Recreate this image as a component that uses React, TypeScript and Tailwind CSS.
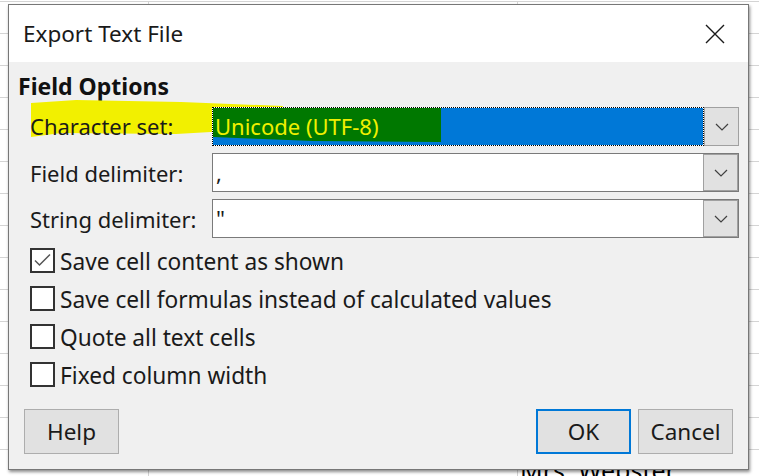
import React from "react";

const rows = Array.from({ length: 15 });

function Chevron() {
  return (
    <svg width="14" height="8" viewBox="0 0 14 8" fill="none">
      <path d="M1 1 L7 7 L13 1" stroke="#404040" strokeWidth="1.2" />
    </svg>
  );
}

function DropButton() {
  return (
    <div className="w-[35px] h-full flex items-center justify-center bg-[#e1e1e1] border border-[#a0a0a0] shrink-0">
      <Chevron />
    </div>
  );
}

function Checkbox({ checked, label }: { checked?: boolean; label: string }) {
  return (
    <div className="h-[38px] flex items-center">
      <div className="w-[25px] h-[25px] border-2 border-[#333333] bg-white flex items-center justify-center shrink-0">
        {checked && (
          <svg width="21" height="21" viewBox="0 0 21 21" fill="none">
            <path d="M3 10.5 L7.5 15 L18 4.5" stroke="#555555" strokeWidth="1.5" />
          </svg>
        )}
      </div>
      <span className="ml-[5px] pt-[4px] text-[22.7px] leading-[28px] text-[#1a1a1a]">{label}</span>
    </div>
  );
}

function Button({ label, focused }: { label: string; focused?: boolean }) {
  return (
    <div
      className={
        focused
          ? "w-[95px] h-[45px] flex items-center justify-center bg-[#e1e1e1] border-2 border-[#0078d7] text-[22.5px] text-[#1a1a1a]"
          : "w-[95px] h-[45px] flex items-center justify-center bg-[#e1e1e1] border border-[#adadad] text-[22.5px] text-[#1a1a1a]"
      }
    >
      {label}
    </div>
  );
}

export default function App() {
  return (
    <div className="relative w-[759px] h-[476px] overflow-hidden bg-white font-['Noto_Sans',sans-serif]">
      {/* spreadsheet behind the dialog */}
      <div className="mt-[1px] border-t border-[#d4d4d4] flex flex-col">
        {rows.map((_, i) => (
          <div key={i} className="h-[32px] flex border-b border-[#d4d4d4]">
            <div className="w-[149px] border-r border-[#d4d4d4]" />
            <div className="w-[369px] border-r border-[#d4d4d4]" />
            <div className="flex-1 pl-[2px]">
              {i === 14 && <span className="block text-[25px] leading-[32px] text-black mt-[4px] whitespace-nowrap">Mrs. Webster</span>}
            </div>
          </div>
        ))}
      </div>

      {/* dialog */}
      <div className="absolute left-[8px] top-[4px] w-[741px] h-[466px] border border-[#777777] bg-[#f0f0f0] shadow-[1px_2px_3px_rgba(0,0,0,0.45)] flex flex-col">
        <div className="h-[57px] bg-white flex items-center justify-between pl-[14px] pr-[23px] shrink-0">
          <span className="text-[22.5px] text-[#1a1a1a]">Export Text File</span>
          <svg width="20" height="20" viewBox="0 0 20 20" fill="none">
            <path d="M1 1 L19 19 M19 1 L1 19" stroke="#1a1a1a" strokeWidth="1.4" />
          </svg>
        </div>

        <div className="pl-[9px] mt-[10px] text-[23px] leading-[28px] font-bold text-[#111111]">Field Options</div>

        <div className="pl-[21px] mt-[7px] grid grid-cols-[182px_527px] gap-y-[7px] text-[22px] text-[#1a1a1a]">
          <div className="relative h-[39px] flex items-center">
            <div className="absolute left-[1px] -top-[7px] w-[252px] h-[37px] bg-[#f2f000] [clip-path:polygon(0px_3px,45px_0px,150px_2px,252px_6px,252px_31px,180px_32px,145px_34px,30px_33px,0px_37px)]" />
            <span className="relative">Character set:</span>
          </div>
          <div className="relative h-[39px] flex bg-white">
            <div className="flex-1 border border-dotted border-black bg-[#0078d7] bg-clip-padding relative">
              <div className="absolute left-0 top-0 w-[228px] h-[34px] bg-[#007800] [clip-path:polygon(0px_0px,228px_0px,228px_34px,100px_33px,50px_31px,0px_29px)]" />
              <span className="relative block pl-[2px] leading-[37px] text-[#f0f000]">Unicode (UTF-8)</span>
            </div>
            <DropButton />
          </div>

          <div className="h-[39px] flex items-center pt-[2px]">Field delimiter:</div>
          <div className="h-[39px] flex border border-[#7a7a7a] bg-white">
            <span className="flex-1 pl-[3px] leading-[37px]">,</span>
            <DropButton />
          </div>

          <div className="h-[39px] flex items-center pt-[2px]">String delimiter:</div>
          <div className="h-[39px] flex border border-[#7a7a7a] bg-white">
            <span className="flex-1 pl-[3px] leading-[37px]">"</span>
            <DropButton />
          </div>
        </div>

        <div className="pl-[21px] mt-[3px] flex flex-col">
          <Checkbox checked label="Save cell content as shown" />
          <Checkbox label="Save cell formulas instead of calculated values" />
          <Checkbox label="Quote all text cells" />
          <Checkbox label="Fixed column width" />
        </div>

        <div className="mt-[16px] px-[15px] flex justify-between">
          <Button label="Help" />
          <div className="flex gap-[7px]">
            <Button label="OK" focused />
            <Button label="Cancel" />
          </div>
        </div>
      </div>
    </div>
  );
}
